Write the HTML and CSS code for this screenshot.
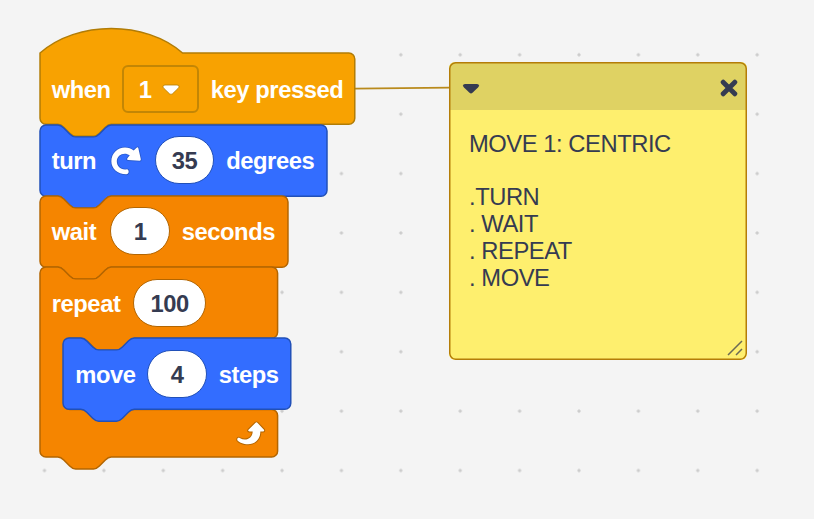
FILE: index.html
```html
<!DOCTYPE html>
<html lang="en">
<head>
<meta charset="utf-8">
<title>Blocks workspace</title>
<link rel="stylesheet" href="styles.css">
</head>
<body>
<main class="workspace">
  <svg class="connector" width="96" height="4" viewBox="0 0 96 4"><path d="M0 2.7 96 1.7"/></svg>

  <section class="stack">
    <div class="block events">
      <svg class="shape" viewBox="0 0 212 48"><path d="M0 0c25-22 71-22 96 0H208a4 4 0 0 1 4 4v40a4 4 0 0 1-4 4H48c-2 0-3 1-4 2l-4 4c-1 1-2 2-4 2H24c-2 0-3-1-4-2l-4-4c-1-1-2-2-4-2H4a4 4 0 0 1-4-4z"/></svg>
      <span class="label when">when</span>
      <span class="dropdown">1 <svg class="caret" viewBox="0 0 18 12"><path d="M3 1H15Q17 1 17 2.6 17 3.5 16 4.5L10.5 9.8Q9 11 7.500 9.800L2 4.500Q1 3.500 1 2.600 1 1 3 1z"/></svg></span>
      <span class="label">key pressed</span>
    </div>
    <div class="block motion">
      <svg class="shape" viewBox="0 0 193.300 48"><path d="M0 4a4 4 0 0 1 4-4H12c2 0 3 1 4 2l4 4c1 1 2 2 4 2H36c2 0 3-1 4-2l4-4c1-1 2-2 4-2H189.300a4 4 0 0 1 4 4v40a4 4 0 0 1-4 4H48c-2 0-3 1-4 2l-4 4c-1 1-2 2-4 2H24c-2 0-3-1-4-2l-4-4c-1-1-2-2-4-2H4a4 4 0 0 1-4-4z"/></svg>
      <span class="label turn">turn</span>
      <svg class="turn-icon" viewBox="0 0 36 36"><path d="M19.200 26.600C21.600 27 21.600 31.700 18.500 31.700 9.500 31.500 3.400 25.800 3.400 18.500 3.400 10.700 9.600 4.600 17.200 4.600 20.600 4.600 23.600 5.800 26 7.600L28.900 4.700Q30.400 3.700 30.700 5.300L33.200 16.400Q33.400 18 31.900 17.900L20.300 17.300Q18.600 16.900 19.600 15.300L22 12.400C16.500 8.500 8.900 12 8.900 18.500 8.900 23.500 13 27.800 19.200 26.600z"/></svg>
      <span class="number">35</span>
      <span class="label">degrees</span>
    </div>
    <div class="block control">
      <svg class="shape" viewBox="0 0 167 48"><path d="M0 4a4 4 0 0 1 4-4H12c2 0 3 1 4 2l4 4c1 1 2 2 4 2H36c2 0 3-1 4-2l4-4c1-1 2-2 4-2H163a4 4 0 0 1 4 4v40a4 4 0 0 1-4 4H48c-2 0-3 1-4 2l-4 4c-1 1-2 2-4 2H24c-2 0-3-1-4-2l-4-4c-1-1-2-2-4-2H4a4 4 0 0 1-4-4z"/></svg>
      <span class="label wait">wait</span>
      <span class="number">1</span>
      <span class="label">seconds</span>
    </div>
    <div class="loop control">
      <svg class="shape" viewBox="0 0 160 128"><path d="M0 4a4 4 0 0 1 4-4H12c2 0 3 1 4 2l4 4c1 1 2 2 4 2H36c2 0 3-1 4-2l4-4c1-1 2-2 4-2H156a4 4 0 0 1 4 4v40a4 4 0 0 1-4 4H64c-2 0-3 1-4 2l-4 4c-1 1-2 2-4 2H40c-2 0-3-1-4-2l-4-4c-1-1-2-2-4-2H20a4 4 0 0 0-4 4v40a4 4 0 0 0 4 4H156a4 4 0 0 1 4 4v24a4 4 0 0 1-4 4H48c-2 0-3 1-4 2l-4 4c-1 1-2 2-4 2H24c-2 0-3-1-4-2l-4-4c-1-1-2-2-4-2H4a4 4 0 0 1-4-4z"/></svg>
      <div class="row">
        <span class="label repeat">repeat</span>
        <span class="number wide">100</span>
      </div>
      <div class="block motion nested">
        <svg class="shape" viewBox="0 0 153.400 48"><path d="M0 4a4 4 0 0 1 4-4H12c2 0 3 1 4 2l4 4c1 1 2 2 4 2H36c2 0 3-1 4-2l4-4c1-1 2-2 4-2H149.400a4 4 0 0 1 4 4v40a4 4 0 0 1-4 4H48c-2 0-3 1-4 2l-4 4c-1 1-2 2-4 2H24c-2 0-3-1-4-2l-4-4c-1-1-2-2-4-2H4a4 4 0 0 1-4-4z"/></svg>
        <span class="label move">move</span>
        <span class="number">4</span>
        <span class="label">steps</span>
      </div>
      <div class="loop-end">
        <svg class="loop-icon" viewBox="0 0 30 26"><path d="M20 2Q21.200 .8 22.400 2L29 9Q29.800 10.700 28 10.900H25.200C25.500 18.500 20 24.200 12.500 24.200 7.500 24.200 3 22.300 1.300 20 .8 18 2.300 16.800 4.200 18 10 21 17 18.500 17.300 10.900H14Q11.800 10.700 12.900 9z"/></svg>
      </div>
    </div>
  </section>

  <article class="note">
    <header class="note-bar">
      <svg class="note-caret" viewBox="0 0 18 12"><path d="M3 1H15Q17 1 17 2.600 17 3.500 16 4.500L10.500 9.800Q9 11 7.500 9.800L2 4.500Q1 3.500 1 2.600 1 1 3 1z"/></svg>
      <svg class="note-close" viewBox="0 0 18 18"><path d="M3.200 3.200 14.800 14.800M14.800 3.200 3.200 14.800"/></svg>
    </header>
    <div class="note-text">MOVE 1: CENTRIC

.TURN
. WAIT
. REPEAT
. MOVE</div>
    <svg class="grip" viewBox="0 0 16 16"><path d="M1 15 15 1M9 15 15 9"/></svg>
    <svg class="note-frame" viewBox="0 0 298 298"><rect x=".75" y=".75" width="296.500" height="296.500" rx="6"/></svg>
  </article>
</main>
</body>
</html>
```

FILE: styles.css
```css
* { box-sizing: border-box; }

body {
  margin: 0;
  font-family: "Liberation Sans", Arial, sans-serif;
}

.workspace {
  position: relative;
  width: 814px;
  height: 519px;
  overflow: hidden;
  background-color: #f4f4f4;
  background-image: radial-gradient(circle, #cccccc 1.2px, transparent 2px);
  background-size: 59.4px 59.4px;
  background-position: 14.8px 25.1px;
}

.stack {
  position: absolute;
  left: 39.8px;
  top: 53.3px;
  display: flex;
  flex-direction: column;
  align-items: flex-start;
  font-size: 23.76px;
  font-weight: 700;
  letter-spacing: -0.43px;
  color: #fff;
}

.block,
.row {
  position: relative;
  display: flex;
  align-items: center;
  gap: 11.9px;
  height: 71.28px;
  padding-left: 11.9px;
  white-space: nowrap;
}

.events { --fill: #f8a201; --edge: #b17c06; width: 314.8px; }
.motion { --fill: #336dff; --edge: #2150b8; width: 287px; }
.control { --fill: #f58500; --edge: #b36500; width: 248px; }

.loop {
  position: relative;
  width: 237.6px;
  height: 190.08px;
}

.nested { width: 227.8px; margin-left: 23.6px; }

.shape {
  position: absolute;
  inset: 0;
  width: 100%;
  height: 100%;
  overflow: visible;
}

.shape path {
  fill: var(--fill);
  stroke: var(--edge);
  stroke-width: 1;
}

.label, .dropdown, .number { position: relative; }

.label { padding-top: 2px; }

.when { width: 58.7px; }
.turn { width: 43.8px; }
.wait { width: 46.8px; }
.repeat { width: 69.9px; }
.move { width: 60.2px; }

.dropdown {
  display: flex;
  align-items: center;
  justify-content: space-between;
  width: 76.6px;
  height: 48px;
  padding: 2px 16.5px 0 14.5px;
  border: 2px solid color-mix(in srgb, var(--edge) 75%, var(--fill));
  border-radius: 6px;
}

.caret {
  width: 18px;
  height: 12px;
  overflow: visible;
  fill: #fff;
  stroke: var(--edge);
  stroke-width: .8;
}

.number {
  display: flex;
  align-items: center;
  justify-content: center;
  width: 59.4px;
  height: 48px;
  padding-top: 2px;
  border: 1px solid var(--edge);
  border-radius: 24px;
  background: #fff;
  color: #353b51;
}

.wide { width: 72.5px; }

.turn-icon {
  position: relative;
  width: 35.6px;
  height: 35.6px;
  overflow: visible;
  fill: #fff;
  stroke: #2858c8;
  stroke-width: 1.6;
  paint-order: stroke;
  margin: 1.500px -0.500px 0 0.500px;
}

.loop-end {
  position: relative;
  display: flex;
  align-items: center;
  justify-content: flex-end;
  height: 47.5px;
  padding: 1px 12px 0 0;
}

.loop-icon {
  width: 29px;
  height: 25px;
  overflow: visible;
  fill: #fff;
  stroke: var(--edge);
  stroke-width: 2;
  paint-order: stroke;
}

.connector {
  position: absolute;
  left: 354px;
  top: 86.2px;
  fill: none;
  stroke: #b98a1c;
  stroke-width: 1.7;
}

.note {
  position: absolute;
  left: 449px;
  top: 62.4px;
  width: 298px;
  height: 298px;
  border-radius: 6px;
  overflow: hidden;
  background: #feef6e;
  color: #353b51;
}

.note-frame {
  position: absolute;
  inset: 0;
  width: 298px;
  height: 298px;
  fill: none;
  stroke: #b47d08;
  stroke-width: 1.5;
}

.note-bar {
  display: flex;
  align-items: center;
  justify-content: space-between;
  height: 48px;
  padding: 4px 9.500px 0 12.500px;
  background: #dfd263;
}

.note-caret { width: 18px; height: 12px; margin-top: 1px; fill: #353b51; }

.note-close {
  width: 18px;
  height: 18px;
  fill: none;
  stroke: #353b51;
  stroke-width: 4.9;
  stroke-linecap: round;
}

.note-text {
  padding: 20.600px 20px;
  font-size: 23.76px;
  line-height: 26.75px;
  letter-spacing: -0.450px;
  white-space: pre-wrap;
}

.grip {
  position: absolute;
  right: 4px;
  bottom: 4px;
  width: 16px;
  height: 16px;
  fill: none;
  stroke: #6b6a55;
  stroke-width: 1.5;
}
```
